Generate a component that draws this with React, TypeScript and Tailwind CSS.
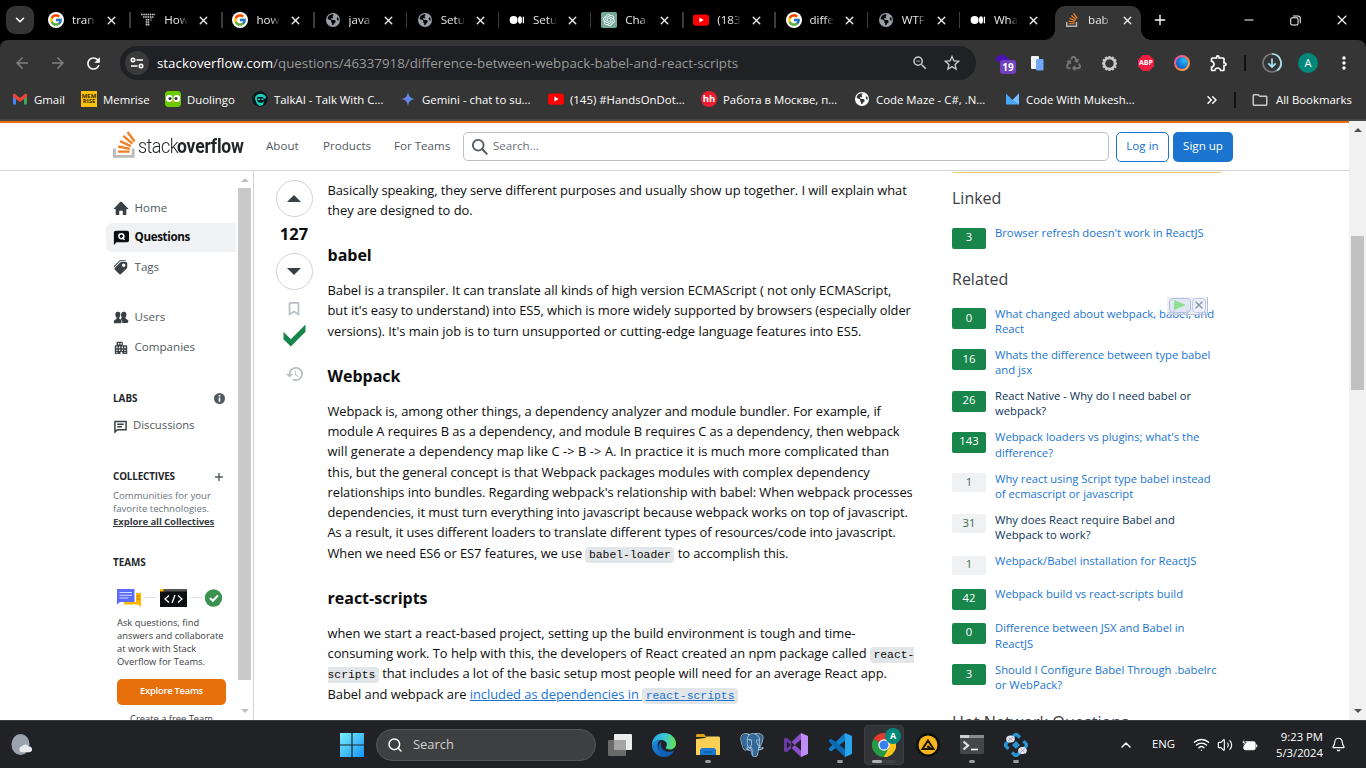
import React from "react";
import { FcGoogle } from "react-icons/fc";
import { FaEarthAmericas, FaRecycle } from "react-icons/fa6";
import { RiOpenaiFill } from "react-icons/ri";
import { SiPostgresql } from "react-icons/si";
import { BsGearWide } from "react-icons/bs";
import { MdOutlineExtension, MdOutlineFolder, MdStarBorder, MdOutlineZoomOut, MdRefresh, MdArrowBack, MdArrowForward, MdMoreVert } from "react-icons/md";
import { ChevronDown, ChevronUp, ChevronsRight, X, Plus, Wifi, Volume2, Bell, Search, Minus } from "lucide-react";

/* ---------- small logos ---------- */

const Google = () => (
  <span className="flex size-4 items-center justify-center rounded-full bg-white">
    <FcGoogle className="size-[14px]" />
  </span>
);
const Globe = ({ white = false }: { white?: boolean }) => (
  <FaEarthAmericas className={white ? "size-3.5 text-white" : "size-3.5 text-[#9aa0a6]"} />
);
const Medium = () => (
  <svg viewBox="0 0 16 16" className="size-4" fill="#fff">
    <circle cx="4.6" cy="8" r="4" />
    <ellipse cx="11" cy="8" rx="2" ry="3.8" />
    <rect x="13.8" y="4.7" width="1.2" height="6.6" />
  </svg>
);
const Youtube = () => (
  <svg viewBox="0 0 16 16" className="size-4">
    <rect x="0" y="2.4" width="16" height="11.4" rx="3" fill="#f00" />
    <path d="M6.4 5.6v5L10.6 8z" fill="#fff" />
  </svg>
);
const ChatGpt = () => (
  <span className="flex size-4 items-center justify-center rounded-xs bg-[#74aa9c]">
    <RiOpenaiFill className="size-3.5 text-white" />
  </span>
);
const DottedT = () => (
  <svg viewBox="0 0 16 16" className="size-4">
    <path d="M1 2.5h14M3 5h11M8.5 7v7M6.5 7v7" stroke="#ccc" strokeWidth="1.6" strokeDasharray="1.6 .6" />
    <path d="M11 5v4" stroke="#888" strokeWidth="1" />
  </svg>
);
const StackGlyph = ({ className, base = "#BCBBBB" }: { className: string; base?: string }) => (
  <svg viewBox="0 0 32 37" className={className}>
    <path d="M26 33v-9h4v13H0V24h4v9h22Z" fill={base} />
    <path
      d="m21.5 0-2.7 2 9.9 13.3 2.7-2L21.5 0ZM26 18.4 13.3 7.8l2.1-2.5 12.7 10.6-2.1 2.5ZM9.1 15.2l15 7 1.4-3-15-7-1.4 3Zm14 10.79.68-2.95-16.1-3.35L7 23l16.1 2.99ZM23 30H7v-3h16v3Z"
      fill="#F48024"
    />
  </svg>
);

/* ---------- browser chrome ---------- */

const tabs: { icon: React.ReactNode; label: string }[] = [
  { icon: <Google />, label: "tran" },
  { icon: <DottedT />, label: "How" },
  { icon: <Google />, label: "how" },
  { icon: <Globe />, label: "java" },
  { icon: <Globe />, label: "Setu" },
  { icon: <Medium />, label: "Setu" },
  { icon: <ChatGpt />, label: "Cha" },
  { icon: <Youtube />, label: "(183" },
  { icon: <Google />, label: "diffe" },
  { icon: <Globe />, label: "WTF" },
  { icon: <Medium />, label: "Wha" },
];

const TabInner = ({ icon, label }: { icon: React.ReactNode; label: string }) => (
  <>
    <span className="flex w-4 shrink-0 justify-center">{icon}</span>
    <span className="ml-2 w-6 shrink-0 whitespace-nowrap text-[11.6px] text-[#e8e8e8] [mask-image:linear-gradient(to_right,#000_60%,transparent)]">
      {label}
    </span>
    <X className="ml-[9px] size-[13px] shrink-0 text-[#eee]" strokeWidth={2.6} />
  </>
);

const TabStrip = () => (
  <div className="flex h-10 bg-black">
    <div className="w-10 pl-1.5 pt-1.5">
      <div className="flex size-7 items-center justify-center rounded-[9px] bg-[#353535]">
        <ChevronDown className="size-3.5 text-white" strokeWidth={2.6} />
      </div>
    </div>
    {tabs.map((t, i) => (
      <div key={i} className="flex w-[92.2px] shrink-0 items-center pl-2">
        <TabInner {...t} />
        {i < 10 && <span className="ml-[11px] h-4 w-[1.5px] shrink-0 bg-[#3c3c3c]" />}
      </div>
    ))}
    <div className="-ml-2 flex h-10 w-[106px] shrink-0 items-end">
      <span className="ml-[-1px] size-2.5 bg-[radial-gradient(circle_at_0_0,#000_9.5px,#353535_10px)]" />
      <div className="flex h-[34px] w-[86px] items-center rounded-t-[10px] bg-[#353535] pb-1.5 pl-[9px]">
        <TabInner icon={<StackGlyph className="h-[14px] w-3" base="#b5b5b5" />} label="bab" />
      </div>
      <span className="size-2.5 bg-[radial-gradient(circle_at_100%_0,#000_9.5px,#353535_10px)]" />
    </div>
    <div className="flex flex-1 items-center text-white">
      <Plus className="size-4" strokeWidth={2} />
      <Minus className="ml-[74px] size-[14px]" strokeWidth={1.8} />
      <svg viewBox="0 0 12 12" className="ml-[34px] size-[11px]" fill="none" stroke="#fff" strokeWidth="1.1">
        <rect x=".8" y="2.9" width="8" height="8" rx="1.6" />
        <path d="M3.2 1h5.6a2.4 2.4 0 0 1 2.4 2.4V9" />
      </svg>
      <X className="ml-[33px] size-[16px]" strokeWidth={1.6} />
    </div>
  </div>
);

const Toolbar = () => (
  <div className="flex h-[46px] items-center rounded-t-lg bg-[#353535]">
    <MdArrowBack className="ml-[13px] size-[18px] text-[#808080]" />
    <MdArrowForward className="ml-[18px] size-[18px] text-[#808080]" />
    <MdRefresh className="ml-[17px] size-[19px] text-white" />
    <div className="ml-[17px] flex h-[34px] w-[856px] items-center rounded-full bg-[#202124] pl-[5px]">
      <span className="flex size-6 items-center justify-center rounded-full bg-[#3a3a3a]">
        <svg viewBox="0 0 14 12" className="h-3 w-[14px]" fill="none" stroke="#fff" strokeWidth="1.6">
          <circle cx="3" cy="3" r="1.7" />
          <path d="M6.5 3H13M1 9h6.5" />
          <circle cx="11" cy="9" r="1.7" />
        </svg>
      </span>
      <span className="ml-2 w-[754px] whitespace-nowrap pt-px text-[13.35px] text-[#9a9a9a]">
        <span className="text-white">stackoverflow.com</span>/questions/46337918/difference-between-webpack-babel-and-react-scripts
      </span>
      <MdOutlineZoomOut className="size-[18px] shrink-0 text-[#c4c7c5]" />
      <MdStarBorder className="ml-[13px] size-[20px] shrink-0 text-[#c4c7c5]" />
    </div>
    <div className="relative ml-[17px] h-6 w-7 shrink-0">
      <svg viewBox="0 0 28 24" className="h-6 w-7">
        <path d="M1 8l8-5 8 5-4 2v6l-6-4z" fill="#4a12b0" />
      </svg>
      <span className="absolute left-[7px] top-[9px] flex h-[14px] w-4 items-center justify-center rounded-[3px] bg-[#7040c0] text-[10px] font-bold text-white">19</span>
    </div>
    <svg viewBox="0 0 16 16" className="ml-[9px] size-4 shrink-0">
      <rect x="1" y="1" width="8" height="13" rx="1" fill="#f1f5ff" />
      <rect x="6" y="4" width="7.500" height="11.500" rx="1" fill="#6ea8fa" />
    </svg>
    <FaRecycle className="ml-5 size-[15px] shrink-0 text-[#757575]" />
    <BsGearWide className="ml-[21px] size-[15px] shrink-0 text-[#d0d0d0]" strokeWidth={1} />
    <span className="ml-[21px] flex size-4 shrink-0 items-center justify-center bg-[#ed1c40] text-[7px] font-bold text-white [clip-path:polygon(30%_0,70%_0,100%_30%,100%_70%,70%_100%,30%_100%,0_70%,0_30%)]">ABP</span>
    <span className="ml-5 flex size-4 shrink-0 items-center justify-center rounded-full bg-linear-135 from-[#e040c0] via-[#ff7040] to-[#ffc060]">
      <span className="size-3 rounded-full bg-[radial-gradient(circle_at_70%_30%,#20c0ff,#1070d0_60%,#1050a0)]" />
    </span>
    <MdOutlineExtension className="ml-[19px] size-5 shrink-0 text-white" />
    <span className="ml-[15px] h-4 w-0.5 shrink-0 bg-[#111]" />
    <svg viewBox="0 0 20 20" className="ml-4 size-5 shrink-0" fill="none" stroke="#a8e4f4" strokeWidth="1.7">
      <circle cx="10" cy="10" r="9" stroke="#7c7c7c" />
      <path d="M10 1a9 9 0 0 1 5 16.500" />
      <path d="M10 5.500v8.500M6.300 10.400 10 14l3.700-3.600" />
    </svg>
    <span className="ml-4 flex size-5 shrink-0 items-center justify-center rounded-full bg-[#00897b] text-[11px] text-white">A</span>
    <MdMoreVert className="ml-4 size-5 shrink-0 text-white" />
  </div>
);

const Bookmark = ({ icon, label, w }: { icon: React.ReactNode; label: string; w: string }) => (
  <div className={"flex shrink-0 items-center " + w}>
    <span className="flex w-4 shrink-0 justify-center">{icon}</span>
    <span className="ml-1.5 whitespace-nowrap">{label}</span>
  </div>
);

const Bookmarks = () => (
  <div className="flex h-[35px] items-center border-b-2 border-[#46484a] bg-[#353535] pb-[6px] pl-3 text-[11.4px] text-white">
    <Bookmark
      w="w-[69px]"
      label="Gmail"
      icon={
        <svg viewBox="0 0 16 12" className="h-3 w-4">
          <path d="M1 1.500v10h3V5z" fill="#4285f4" />
          <path d="M15 1.500v10h-3V5z" fill="#34a853" />
          <path d="M1 1.500 2.500.5 8 5l5.500-4.500L15 1.500V4L8 9 1 4z" fill="#ea4335" />
        </svg>
      }
    />
    <Bookmark
      w="w-[84px]"
      label="Memrise"
      icon={<span className="flex size-4 flex-col items-center justify-center bg-[#fdc20c] text-[6px] font-bold leading-[5.500px] text-[#3a2c00]"><span>MEM</span><span>RISE</span></span>}
    />
    <Bookmark
      w="w-[87px]"
      label="Duolingo"
      icon={
        <svg viewBox="0 0 16 16" className="size-4">
          <rect width="16" height="16" rx="3.500" fill="#6ccb00" />
          <rect x="1" y="4" width="6.500" height="7" rx="3" fill="#fff" />
          <rect x="8.500" y="4" width="6.500" height="7" rx="3" fill="#fff" />
          <circle cx="5" cy="7.500" r="1.600" fill="#333" />
          <circle cx="11" cy="7.500" r="1.600" fill="#333" />
          <path d="M6.500 10h3L8 12z" fill="#ff9600" />
        </svg>
      }
    />
    <Bookmark
      w="w-[148px]"
      label="TalkAI - Talk With C..."
      icon={
        <svg viewBox="0 0 16 16" className="size-4">
          <circle cx="8" cy="8" r="7.800" fill="#06171c" />
          <path d="M3 8c0-3 2-5 5.500-5S14 5 14 7l-2 1-1-2H5.500l-.5 2 1 3 3 1 3-1.500-1 3.500-3 1-3-2z" fill="#19cdbb" />
          <path d="M6 7.500h2v1.500H6zM9.500 7.500h2v1.500h-2z" fill="#19cdbb" />
        </svg>
      }
    />
    <Bookmark
      w="w-[148px]"
      label="Gemini - chat to su..."
      icon={
        <svg viewBox="0 0 16 16" className="size-3.5">
          <defs><linearGradient id="gem"><stop stopColor="#8e70e8" /><stop offset="1" stopColor="#3a9ae8" /></linearGradient></defs>
          <path d="M8 0c.8 5 3 7.200 8 8-5 .8-7.200 3-8 8-.8-5-3-7.200-8-8 5-.8 7.200-3 8-8z" fill="url(#gem)" />
        </svg>
      }
    />
    <Bookmark w="w-[153px]" label="(145) #HandsOnDot..." icon={<Youtube />} />
    <Bookmark w="w-[153px]" label="Работа в Москве, п..." icon={<span className="flex size-4 items-center justify-center rounded-full bg-[#ee1c2e] pb-px text-[9.5px] font-bold">hh</span>} />
    <Bookmark w="w-[150px]" label="Code Maze - C#, .N..." icon={<Globe white />} />
    <Bookmark
      w="w-[200px]"
      label="Code With Mukesh..."
      icon={
        <svg viewBox="0 0 14 12" className="h-3 w-[13px]">
          <path d="M0 0l7 7 7-7v12H0z" fill="#4aa6f8" />
          <path d="M7 7l7-7v12z" fill="#74beff" />
        </svg>
      }
    />
    <ChevronsRight className="size-4 shrink-0" strokeWidth={2.2} />
    <span className="ml-[14px] h-4 w-0.5 shrink-0 bg-[#111]" />
    <MdOutlineFolder className="ml-[15px] size-[18px] shrink-0 text-[#c8c8c8]" />
    <span className="ml-[7px] whitespace-nowrap">All Bookmarks</span>
  </div>
);

/* ---------- site header ---------- */

const SearchGlyph = ({ className }: { className: string }) => (
  <svg viewBox="0 0 18 18" className={className} fill="#525960">
    <path d="m18 16.500-5.140-5.180h-.35a7 7 0 1 0-1.190 1.190v.35L16.500 18l1.500-1.500ZM12 7A5 5 0 1 1 2 7a5 5 0 0 1 10 0Z" />
  </svg>
);

const SiteHeader = () => (
  <header className="flex h-[50px] shrink-0 items-center border-b border-t-2 border-b-[#d0d3d7] border-t-[#e7700d] bg-white text-[11.6px] text-[#525960]">
    <div className="flex w-[153px] items-start pl-[113px]">
      <StackGlyph className="mb-1 h-[27px] w-[23px] shrink-0" />
      <span className="ml-[2px] mt-[2px] flex text-[20px] leading-[27px] text-[#222426] [font-family:Roboto,sans-serif]">
        <span className="w-[39px] origin-left scale-x-[.9] tracking-[-0.6px] font-light">stack</span>
        <span className="origin-left scale-x-[.875] tracking-[-0.2px] font-bold">overflow</span>
      </span>
    </div>
    <span className="mb-px ml-[113px] w-[57px]">About</span>
    <span className="mb-px w-[71px]">Products</span>
    <span className="mb-px w-[69px] whitespace-nowrap">For Teams</span>
    <div className="flex h-[29px] w-[646px] items-center rounded-[5px] border border-[#babfc4] pl-2">
      <SearchGlyph className="size-4" />
      <span className="mb-px ml-[5px] text-[#6a737c]">Search...</span>
    </div>
    <div className="ml-[7px] flex h-[30px] w-[53px] items-center justify-center rounded-[5px] border border-[#1b75d0] pb-0.5 text-[#1b75d0]">Log in</div>
    <div className="ml-1 flex h-[30px] w-[60px] items-center justify-center rounded-[5px] bg-[#1b75d0] pb-0.5 text-white">Sign up</div>
  </header>
);

/* ---------- left navigation ---------- */

const HomeIcon = () => (
  <svg viewBox="0 0 18 18" className="size-4" fill="#3b4045">
    <path d="M15 10v6a1 1 0 0 1-1 1h-3v-5H7v5H4a1 1 0 0 1-1-1v-6H.5L8 2.300c.6-.5 1.400-.5 2 0l7.500 7.700z" />
  </svg>
);
const QuestionIcon = () => (
  <svg viewBox="0 0 18 18" className="size-4">
    <path d="M4 2h12a2 2 0 0 1 2 2v9a2 2 0 0 1-2 2H4l-3 3V4c0-1.100.9-2 3-2Z" fill="#0c0d0e" />
    <circle cx="9.400" cy="8.200" r="2.800" fill="none" stroke="#fff" strokeWidth="1.700" />
    <path d="m10 9.500 3 2.600" stroke="#fff" strokeWidth="1.400" />
  </svg>
);
const TagsIcon = () => (
  <svg viewBox="0 0 18 18" className="size-4" fill="#3b4045">
    <path d="M9.240 1a3 3 0 0 0-2.120.88l-5.700 5.700a2 2 0 0 0-.38 2.310 3 3 0 0 1 .67-1.010l6-6A3 3 0 0 1 9.830 2H14a3 3 0 0 1 .79.100A2 2 0 0 0 13 1H9.240Z" />
    <path d="M9.830 3a2 2 0 0 0-1.420.59l-6 6a2 2 0 0 0 0 2.820L6.600 16.600a2 2 0 0 0 2.820 0l6-6A2 2 0 0 0 16 9.170V5a2 2 0 0 0-2-2H9.830ZM12 9a2 2 0 1 1 0-4 2 2 0 0 1 0 4Z" />
  </svg>
);
const UsersIcon = () => (
  <svg viewBox="0 0 18 18" className="size-4" fill="#3b4045">
    <path d="M17 14a2 2 0 0 1-1 1.700h-5.500V14.500c0-1.500-1-2.300-2.300-3 1.300-.4 1.600-1.100 1.500-1.900C9 8.300 8.700 5.800 9.600 4.300c1-1.700 4.300-1.700 5.200.1.700 1.600.3 3.900-.9 5.400.2 1.900 3.600 1.600 3.600 4.200z" />
    <path d="M9.300 16H1.200C.6 13.500 1 12.300 3.200 11.400c1-.4 1-.9.900-1.500C2.500 8.200 2.200 5.700 3.100 4.200 4 2.700 7 2.700 7.900 4.300c.8 1.500.4 4-.9 5.600-.1.700 0 1.100.9 1.500 1.600.6 2.200 1.800 1.400 4.600z" />
  </svg>
);
const CompaniesIcon = () => (
  <svg viewBox="0 0 18 18" className="size-4" fill="#3b4045">
    <path
      fillRule="evenodd"
      d="M5 3h5a1 1 0 0 1 1 1v3h4a1 1 0 0 1 1 1v9h-5.500v-2.500H8.500V17H2V8a1 1 0 0 1 1-1h1V4a1 1 0 0 1 1-1zM5.600 4.600v1.600h1.500V4.600zm2.800 0v1.600h1.500V4.600zM3.600 8.500v2h1.500v-2zm3 0v2h1.500v-2zm3.200 0v2h1.500v-2zm3 0v2h1.500v-2zM3.600 12v1.500h1.500V12zm3 0v1.500h1.500V12zm3.200 0v1.500h1.500V12zm3 0v1.500h1.500V12zM3.600 15v1h1.500v-1zm9.200 0v1h1.500v-1z"
    />
  </svg>
);
const DiscussIcon = () => (
  <svg viewBox="0 0 14 14" className="size-[13px]" fill="none" stroke="#3b4045" strokeWidth="1.600">
    <path d="M1 13V1.500h12v9H3.500L1 13zM3.500 4.500h7M3.500 7.300h5" />
  </svg>
);

const NavRow = ({ icon, label, active = false }: { icon: React.ReactNode; label: string; active?: boolean }) => (
  <div className={active ? "flex h-[29.500px] items-center rounded-l-md bg-[#f0f1f2] pl-[7px] font-bold text-[#0c0d0e]" : "flex h-[29.500px] items-center pl-[7px]"}>
    {icon}
    <span className={active ? "mb-px ml-[5.500px] tracking-[-0.35px]" : "mb-px ml-[5.500px]"}>{label}</span>
  </div>
);

const TeamsArt = () => (
  <svg viewBox="0 0 106 18" className="h-[18px] w-[106px]">
    <path d="M12 4h12v14l-3-2.500h-14V13H19V4z" fill="#ffb500" />
    <path d="M20 7h2.500M20 10h2.500" stroke="#a87000" />
    <path d="M0 0h17.500v13H3l-3 2.500z" fill="#5c6bff" />
    <path d="M2.500 3.500H15M2.500 6.300H15M2.500 9h9" stroke="#d5dbff" />
    <path d="M28 8.500h11M74 8.500h11" stroke="#ddd" />
    <rect x="43" width="27" height="18" fill="#0c0d0e" />
    <path d="M46 0h24v2.500H46z" fill="#555" />
    <path d="M43 0h3.500v2.500H43z" fill="#ffb500" />
    <path d="m52 6.500-4 3.500 4 3.500M61 6.500l4 3.500-4 3.500M58 6l-3 8" stroke="#fff" strokeWidth="1.300" fill="none" />
    <circle cx="96.500" cy="9" r="8.700" fill="#3a9250" />
    <path d="m93 9 2.800 2.800L101 6.500" stroke="#fff" strokeWidth="2" fill="none" />
  </svg>
);

const LeftNav = () => (
  <nav className="ml-[106px] flex w-[148px] shrink-0 border-r border-[#d0d3d7]">
    <div className="h-full w-[130px] shrink-0 overflow-hidden pt-[22px] text-[11.6px] text-[#525960]">
      <NavRow icon={<HomeIcon />} label="Home" />
      <NavRow icon={<QuestionIcon />} label="Questions" active />
      <NavRow icon={<TagsIcon />} label="Tags" />
      <div className="h-[21px]" />
      <NavRow icon={<UsersIcon />} label="Users" />
      <NavRow icon={<CompaniesIcon />} label="Companies" />
      <div className="mt-[27px] flex h-5 items-center justify-between pl-[7px] pr-[11px] text-[9.900px] font-bold text-[#232629]">
        LABS
        <svg viewBox="0 0 12 12" className="size-[11px]">
          <circle cx="6" cy="6" r="6" fill="#525960" />
          <path d="M6 2.300v1.600M6 5v4.500" stroke="#fff" strokeWidth="1.800" />
        </svg>
      </div>
      <div className="mt-[3px] flex h-[29px] items-center pl-[8px] text-[11.300px]"><DiscussIcon /><span className="mb-px ml-[6px]">Discussions</span></div>
      <div className="mt-[26px] flex h-5 items-center justify-between pl-[7px] pr-[11px] text-[9.900px] font-bold tracking-[-0.15px] text-[#232629]">
        <span className="mb-px">COLLECTIVES</span>
        <Plus className="size-3 text-[#525960]" strokeWidth={2.800} />
      </div>
      <div className="mt-0.5 whitespace-nowrap pl-[7px] text-[9.600px] leading-[13px] text-[#6a737c]">
        <div>Communities for your</div>
        <div>favorite technologies.</div>
        <div className="font-bold tracking-[-0.12px] text-[#3b4045] underline">Explore all Collectives</div>
      </div>
      <div className="mt-[25px] h-5 pl-[7px] pt-[2px] text-[9.900px] font-bold text-[#232629]">TEAMS</div>
      <div className="mt-[16px] pl-[11px]"><TeamsArt /></div>
      <div className="mt-[9px] whitespace-nowrap pl-[11px] text-[9.350px] leading-[13px] text-[#3b4045]">
        <div>Ask questions, find</div>
        <div>answers and collaborate</div>
        <div>at work with Stack</div>
        <div>Overflow for Teams.</div>
      </div>
      <div className="ml-[11px] mt-[11px] flex h-[26px] w-[109px] items-center justify-center rounded-[5px] bg-[#e7700d] text-[9.400px] font-semibold tracking-[-0.25px] text-white">Explore Teams</div>
      <div className="ml-[11px] mt-[7px] w-[109px] whitespace-nowrap text-center text-[9.350px] leading-[13px] text-[#3b4045]">Create a free Team</div>
    </div>
    <div className="ml-[2px] flex w-[13px] flex-col items-center">
      <svg viewBox="0 0 8 4" className="mt-[7px] h-1 w-2 shrink-0" fill="#c0c0c0"><path d="M0 4 4 0l4 4z" /></svg>
      <div className="mt-[6px] h-[492px] w-[13px] shrink-0 bg-[#c9c9c9]" />
      <svg viewBox="0 0 8 4" className="mt-[29px] h-1 w-2 shrink-0" fill="#c0c0c0"><path d="M0 0h8L4 4z" /></svg>
    </div>
  </nav>
);

/* ---------- answer ---------- */

const VoteColumn = () => (
  <div className="ml-[22px] flex w-9 shrink-0 flex-col items-center pt-[9px]">
    <div className="flex size-[37px] items-center justify-center rounded-full border border-[#d0d3d7]">
      <svg viewBox="0 0 14 7" className="h-[7px] w-[14px]" fill="#3b4045"><path d="M0 7l7-7 7 7z" /></svg>
    </div>
    <div className="flex h-9 items-center pb-0.5 text-[16.500px] font-bold text-[#0c0d0e]">127</div>
    <div className="flex size-[37px] items-center justify-center rounded-full border border-[#d0d3d7]">
      <svg viewBox="0 0 14 7" className="h-[7px] w-[14px]" fill="#3b4045"><path d="M0 0h14L7 7z" /></svg>
    </div>
    <svg viewBox="0 0 18 18" className="mt-[11px] size-4" fill="#babfc4">
      <path d="m9 10.600 4 2.660V3H5v10.260l4-2.660ZM3 17V3c0-1.100.9-2 2-2h8a2 2 0 0 1 2 2v14l-6-4-6 4Z" />
    </svg>
    <svg viewBox="0 0 36 36" className="mt-[2px] size-[33px]" fill="#18864b"><path d="m6 14 8 8L30 6v8L14 30l-8-8v-8Z" /></svg>
    <svg viewBox="0 0 19 18" className="mt-[14px] h-4 w-[17px]" fill="#babfc4">
      <path d="M3 9a8 8 0 1 1 3.730 6.770L8.200 14.300A6 6 0 1 0 5 9l3.010-.01-4 4-4-4h3L3 9Zm7-4h1.010L11 9.360l3.220 2.100-.6.93L10 10V5Z" />
    </svg>
  </div>
);

const Code = ({ children, className = "rounded-[4px] px-[3.500px]" }: { children: React.ReactNode; className?: string }) => (
  <code className={"bg-[#e3e6e8] py-[2px] text-[11.400px] tracking-normal [font-family:'Liberation_Mono',monospace] " + className}>{children}</code>
);
const H = ({ children }: { children: React.ReactNode }) => (
  <h2 className="flex h-[60px] items-center pt-[10px] text-[16px] font-bold">{children}</h2>
);
const Paragraph = ({ children }: { children: React.ReactNode }) => <div className="whitespace-nowrap">{children}</div>;
const L = ({ children, t = "" }: { children: React.ReactNode; t?: string }) => <div className={"h-[20.250px] " + t}>{children}</div>;

const snug = "tracking-[-0.065px]";
const slim = "tracking-[-0.035px]";

const Answer = () => (
  <article className="ml-[15.500px] w-[624.500px] shrink-0 pt-[8.500px] text-[12.900px] leading-[20.250px] text-[#0c0d0e]">
    <Paragraph>
      <L t={snug}>Basically speaking, they serve different purposes and usually show up together. I will explain what</L>
      <L>they are designed to do.</L>
    </Paragraph>
    <H>babel</H>
    <Paragraph>
      <L t={slim}>Babel is a transpiler. It can translate all kinds of high version ECMAScript ( not only ECMAScript,</L>
      <L t={snug}>but it's easy to understand) into ES5, which is more widely supported by browsers (especially older</L>
      <L>versions). It's main job is to turn unsupported or cutting-edge language features into ES5.</L>
    </Paragraph>
    <H>Webpack</H>
    <Paragraph>
      <L t={snug}>Webpack is, among other things, a dependency analyzer and module bundler. For example, if</L>
      <L t={snug}>module A requires B as a dependency, and module B requires C as a dependency, then webpack</L>
      <L t="tracking-[0.055px]">{"will generate a dependency map like C -> B -> A. In practice it is much more complicated than"}</L>
      <L t={slim}>this, but the general concept is that Webpack packages modules with complex dependency</L>
      <L t={snug}>relationships into bundles. Regarding webpack's relationship with babel: When webpack processes</L>
      <L t={snug}>dependencies, it must turn everything into javascript because webpack works on top of javascript.</L>
      <L t="tracking-[-0.09px]">As a result, it uses different loaders to translate different types of resources/code into javascript.</L>
      <L t={snug}>When we need ES6 or ES7 features, we use <Code>babel-loader</Code> to accomplish this.</L>
    </Paragraph>
    <H>react-scripts</H>
    <Paragraph>
      <L t={slim}>when we start a react-based project, setting up the build environment is tough and time-</L>
      <L t={slim}>consuming work. To help with this, the developers of React created an npm package called <Code className="rounded-l-[4px] pl-[3.500px]">react-</Code></L>
      <L t={slim}><Code className="rounded-r-[4px] pr-[3.500px]">scripts</Code> that includes a lot of the basic setup most people will need for an average React app.</L>
      <L t={slim}>Babel and webpack are <a className="text-[#1b75d0] underline">included as dependencies in <Code>react-scripts</Code></a></L>
    </Paragraph>
  </article>
);

/* ---------- right column ---------- */

type Related = { n: number; lines: string[]; kind?: "visited"; muted?: boolean; h: string };
const related: Related[] = [
  { n: 0, lines: ["What changed about webpack, babel, and", "React"], h: "h-[41.300px]" },
  { n: 16, lines: ["Whats the difference between type babel", "and jsx"], h: "h-[41.300px]" },
  { n: 26, lines: ["React Native - Why do I need babel or", "webpack?"], kind: "visited", h: "h-[41.300px]" },
  { n: 143, lines: ["Webpack loaders vs plugins; what's the", "difference?"], h: "h-[41.300px]" },
  { n: 1, lines: ["Why react using Script type babel instead", "of ecmascript or javascript"], muted: true, h: "h-[41.300px]" },
  { n: 31, lines: ["Why does React require Babel and", "Webpack to work?"], kind: "visited", muted: true, h: "h-[41.300px]" },
  { n: 1, lines: ["Webpack/Babel installation for ReactJS"], muted: true, h: "h-[33px]" },
  { n: 42, lines: ["Webpack build vs react-scripts build"], h: "h-[34px]" },
  { n: 0, lines: ["Difference between JSX and Babel in", "ReactJS"], h: "h-[41.300px]" },
  { n: 3, lines: ["Should I Configure Babel Through .babelrc", "or WebPack?"], h: "h-[41.300px]" },
];

const RelatedRow = ({ n, lines, kind, muted, h }: Related) => (
  <div className={"flex items-start " + h}>
    <span
      className={
        muted
          ? "mt-[2.500px] flex h-[19px] w-[34px] shrink-0 items-center justify-center rounded-xs bg-[#f0f1f2] pb-px text-[#3b6a4f]"
          : "mt-[2.500px] flex h-[21px] w-[34px] shrink-0 items-center justify-center rounded-xs bg-[#18864b] pb-px text-white"
      }
    >
      {n}
    </span>
    <span className={kind ? "ml-[9px] whitespace-nowrap leading-[15.300px] text-[#0c3358]" : "ml-[9px] whitespace-nowrap leading-[15.300px] text-[#1b75d0]"}>
      {lines.map((l) => <span key={l} className="block">{l}</span>)}
    </span>
  </div>
);

const RightColumn = () => (
  <aside className="w-[270px] shrink-0 text-[11.250px]">
    <div className="h-[2px] rounded-b-sm border-b border-[#f1c96b]" />
    <h3 className="mt-[13px] h-6 text-[16px] leading-6 text-[#3b4045]">Linked</h3>
    <div className="mt-[15px]"><RelatedRow n={3} lines={["Browser refresh doesn't work in ReactJS"]} h="h-[41.500px]" /></div>
    <h3 className="h-6 text-[16px] leading-6 text-[#3b4045]">Related</h3>
    <div className="relative mt-[15px]">
      {related.map((r, i) => <RelatedRow key={i} {...r} />)}
      <div className="absolute left-[215px] top-[-9px] flex h-[18px] w-[41px] items-center gap-px border-r border-b border-[#b4c0d4] bg-[#dfe6f4]/60 pl-0.5">
        <span className="flex h-[15px] w-[22px] items-center justify-center rounded-sm border border-[#b4bfdc] bg-[#d5dcef]/50">
          <svg viewBox="0 0 12 10" className="h-2.5 w-3" fill="#8fe08f"><path d="M0 0l12 5-12 5z" /></svg>
        </span>
        <span className="flex h-[15px] w-[14px] items-center justify-center rounded-sm border border-[#c2cbe0] bg-[#eef1f9]/50">
          <X className="size-3 text-[#8e98ac]" strokeWidth={3} />
        </span>
      </div>
    </div>
    <h3 className="mt-[7px] h-6 whitespace-nowrap text-[16.200px] leading-6 text-[#3b4045]">Hot Network Questions</h3>
  </aside>
);

/* ---------- taskbar ---------- */

const AppSlot = ({ children, mark = "none" }: { children: React.ReactNode; mark?: "none" | "dot" | "active" }) => (
  <div className={mark === "active" ? "flex h-10 w-10 shrink-0 flex-col items-center rounded-[4px] border border-[#3c3e41] bg-[#323437] pt-[7px]" : "flex h-10 w-10 shrink-0 flex-col items-center pt-2"}>
    <div className="flex size-6 items-center justify-center">{children}</div>
    {mark === "dot" && <span className="mt-[3px] h-[3px] w-1.5 rounded-full bg-[#9c9c9c]" />}
    {mark === "active" && (
      <span className="mt-[3px] h-[3px] w-6 rounded-full bg-[#3f4144]"><span className="block h-[3px] w-2.5 rounded-full bg-[#b0b0b0]" /></span>
    )}
  </div>
);

const Edge = () => (
  <svg viewBox="0 0 24 24" className="size-6">
    <defs>
      <linearGradient id="edgeTop" x1="0" y1=".4" x2="1" y2=".5"><stop stopColor="#2aa8e8" /><stop offset=".5" stopColor="#38c8d8" /><stop offset="1" stopColor="#66e050" /></linearGradient>
      <linearGradient id="edgeLow" x1="0" y1="0" x2="1" y2="1"><stop stopColor="#1b8fe0" /><stop offset="1" stopColor="#0c4fa0" /></linearGradient>
    </defs>
    <path d="M0 12C0 4.500 5.500 0 12 0c7 0 12 5 12 10.500 0 3.500-2.500 6-6 6-2.500 0-4.300-1-4.300-2 0-.7 1.200-1.200 1.200-3 0-2.500-2.700-4.500-6-4.500C4.500 7 1.500 9 0 12z" fill="url(#edgeTop)" />
    <path d="M0 12c1-3.500 4.500-5 8-4.600C5.500 9 5 12 6 15c1.500 4.500 6 6.500 10.500 5.500 2-.4 3.800-1.200 5.500-2.500-2 4-5.500 6-10 6C5.500 24 0 18.800 0 12z" fill="url(#edgeLow)" />
    <path d="M10 8.800c-3 3 .2 10 6.500 10 2 0 4-.5 5.800-1.500-3 4-7.500 5.200-11.300 3.700C5.500 18.500 4.500 11 10 8.800z" fill="#125fb8" />
  </svg>
);
const Folder = () => (
  <svg viewBox="0 0 24 24" className="size-6">
    <path d="M0 2.500C0 1.600.6 1 1.500 1H8l2.500 3H0z" fill="#e0a010" />
    <path d="M0 6 9 5l2-1.500h11.500c.9 0 1.500.6 1.500 1.500v17H0z" fill="#fcd054" />
    <path d="M4 22v-4.500c0-1.400 1-2.500 2.500-2.500h11c1.500 0 2.500 1.100 2.500 2.500V22z" fill="#1878cc" />
    <path d="M8 19h8" stroke="#0c5fa8" strokeWidth="1.500" />
  </svg>
);
const VisualStudio = () => (
  <svg viewBox="0 0 24 24" className="size-6">
    <path d="M0 6l2.500-1.200L17 17.500V24L0 8zM0 18l2.500 1.200L17 6.500V0L0 16z" fill="#8a50c8" />
    <path d="M17 0l7 3v18l-7 3z" fill="#c08cf8" />
    <path d="M0 6l2.500-1.200 5 6.200v2l-5 6.200L0 18z" fill="#6a3aa8" />
    <path d="M3 8.500 6.500 12 3 15.500z" fill="#202225" />
    <path d="M11.500 12 17 7.500v9z" fill="#202225" />
  </svg>
);
const VsCode = () => (
  <svg viewBox="0 0 24 24" className="size-6">
    <path d="M17 0 1 15.200c-.5.500-.5 1 0 1.500L2.500 18c.4.300.8.300 1.200 0L18 7z" fill="#0f7fcc" />
    <path d="M17 24 1 8.800c-.5-.5-.5-1 0-1.500L2.500 6c.4-.3.8-.3 1.200 0L18 17z" fill="#0a6bb4" />
    <path d="M17 0l6 2.600c.6.300 1 .8 1 1.400v16c0 .6-.4 1.100-1 1.400L17 24z" fill="#2ba4ee" />
  </svg>
);
const Chrome = () => (
  <span className="relative flex size-6">
    <svg viewBox="0 0 24 24" className="size-6">
      <path d="M12 12 1.600 6A12 12 0 0 1 22.400 6z" fill="#e33b2e" />
      <path d="M12 12h0L22.400 6A12 12 0 0 1 12 24z" fill="#fcc41a" />
      <path d="M12 12v0L1.600 6A12 12 0 0 0 12 24l5.200-9z" fill="#279a45" />
      <path d="M12 6.500h10.700A12 12 0 0 1 12 24l5-9z" fill="#fcc41a" />
      <circle cx="12" cy="12" r="5.700" fill="#fff" />
      <circle cx="12" cy="12" r="4.500" fill="#3a7ff0" />
    </svg>
    <span className="absolute left-[13px] top-[-5px] flex size-4 items-center justify-center rounded-full bg-[#00897b] text-[9px] font-bold text-white">A</span>
  </span>
);

const Taskbar = () => (
  <footer className="flex h-12 shrink-0 items-center border-t border-[#3a3c3e] bg-[#202225] text-white">
    <svg viewBox="0 0 22 24" className="ml-[11px] mt-px h-[23px] w-[21px]">
      <ellipse cx="10" cy="11" rx="9.500" ry="11" fill="#9aa3ae" />
      <path d="M12 19a3 3 0 0 1-.5-6 4 4 0 0 1 7 0 3 3 0 0 1 1 6z" fill="#e8eaee" />
    </svg>
    <svg viewBox="0 0 24 24" className="ml-[308px] size-6">
      <defs><linearGradient id="win" x1="0" y1="0" x2="1" y2="1"><stop stopColor="#7beeff" /><stop offset="1" stopColor="#1496f4" /></linearGradient></defs>
      <path d="M0 0h11.400v11.400H0zM12.600 0H24v11.400H12.600zM0 12.600h11.400V24H0zM12.600 12.600H24V24H12.600z" fill="url(#win)" />
    </svg>
    <div className="ml-3 flex h-8 w-[220px] items-center rounded-full border border-[#55575a] bg-[#3d3f41] pl-[10px]">
      <Search className="size-4 text-white" strokeWidth={2.200} />
      <span className="ml-[10px] text-[12.900px] text-[#d2d2d2]">Search</span>
    </div>
    <div className="ml-[4px] flex gap-1">
      <AppSlot>
        <svg viewBox="0 0 24 24" className="size-6">
          <rect x="6" y="1" width="18" height="16" rx="1" fill="#ececec" />
          <rect x="0" y="7" width="18" height="16" rx="1" fill="#6a6a6a" />
          <rect x="6" y="7" width="12" height="10" fill="#a4a4a4" />
        </svg>
      </AppSlot>
      <AppSlot><Edge /></AppSlot>
      <AppSlot mark="dot"><Folder /></AppSlot>
      <AppSlot>
        <span className="relative flex size-6">
          <svg viewBox="0 0 24 24" className="absolute inset-0 size-6">
            <path d="M2 3c3-3 7-2.500 9-1.500C14 .5 20-.5 22.500 3.500c1 3-1 8-3 11.500l3 1.500-5 2c-.5 3-1.500 5-4.500 4.500-2 0-2.500-3-3-7l-4 1C3 14 0 7 2 3z" fill="#35699a" />
          </svg>
          <SiPostgresql className="relative size-6 text-[#b4cfe2]" />
        </span>
      </AppSlot>
      <AppSlot><VisualStudio /></AppSlot>
      <AppSlot mark="dot"><VsCode /></AppSlot>
      <AppSlot mark="active"><Chrome /></AppSlot>
      <AppSlot>
        <svg viewBox="0 0 24 24" className="size-6">
          <circle cx="12" cy="12" r="11.800" fill="#0d0d0d" />
          <circle cx="12" cy="12" r="9.500" fill="#f9b51c" />
          <path d="M12 7.500 6.500 16h7l-2-3 3.500 3h2.500z" fill="none" stroke="#1a1405" strokeWidth="2" />
        </svg>
      </AppSlot>
      <AppSlot mark="dot">
        <svg viewBox="0 0 24 20" className="h-5 w-6">
          <rect width="24" height="19" rx="1.500" fill="#444648" />
          <path d="M0 0h24v3H0z" fill="#8c8c8c" />
          <path d="M0 0h9v3H0z" fill="#d0d0d0" />
          <path d="m3.500 6.500 4.500 4-4.500 4" stroke="#ddd" strokeWidth="2.300" fill="none" />
          <path d="M11 14.500h7" stroke="#fff" strokeWidth="1.600" />
        </svg>
      </AppSlot>
      <AppSlot mark="dot">
        <svg viewBox="0 0 24 24" className="size-6">
          <path d="m8 4.500 4-3.500 4 3.500M19.500 8l3.500 4-3.500 4M16 19.500 12 23l-4-3.500M4.500 16 1 12l3.500-4" stroke="#2a94d0" strokeWidth="3.400" fill="none" />
          <path d="m12 8 4 4-4 4-4-4z" fill="#2a94d0" />
          <ellipse cx="6.500" cy="6" rx="4.300" ry="3.600" fill="#e8e8f4" />
          <ellipse cx="18.500" cy="17.500" rx="4.300" ry="3.600" fill="#e8e8f4" />
          <path d="m4 8 5-4M4.500 4.500l4 3M16 19.500l5-4M16.500 16l4 3" stroke="#8890a8" strokeWidth=".8" />
        </svg>
      </AppSlot>
    </div>
    <ChevronUp className="ml-[82px] size-4 shrink-0" strokeWidth={2.200} />
    <span className="ml-[18px] w-[24px] text-[11.300px]">ENG</span>
    <Wifi className="ml-[17px] size-[17px] shrink-0" strokeWidth={2} />
    <Volume2 className="ml-[7px] size-4 shrink-0" strokeWidth={1.700} />
    <svg viewBox="0 0 18 14" className="ml-[8px] h-[14px] w-[17px] shrink-0">
      <rect x="3" y="3.600" width="12" height="8.400" rx="1.500" fill="#fff" stroke="#fff" />
      <path d="M16 6.500h1.200v3H16z" fill="#fff" />
      <path d="M3.800 0 .8 5h2l-.8 3.500L5.500 4H3.600z" fill="#fff" stroke="#202225" strokeWidth=".8" />
    </svg>
    <div className="ml-[11px] w-[54px] whitespace-nowrap text-right text-[11.300px] leading-4">
      <div>9:23 PM</div>
      <div>5/3/2024</div>
    </div>
    <Bell className="ml-[8px] size-[15px] shrink-0" strokeWidth={1.900} />
  </footer>
);

const PageScrollbar = () => (
  <div className="flex w-[17px] shrink-0 flex-col items-center bg-[#f1f1f1]">
    <svg viewBox="0 0 8 4" className="mt-[7px] h-1 w-2 shrink-0" fill="#505050"><path d="M0 4 4 0l4 4z" /></svg>
    <div className="mt-[104px] h-[154px] w-[13px] shrink-0 bg-[#c1c1c1]" />
    <svg viewBox="0 0 8 4" className="mb-[7px] mt-auto h-1 w-2 shrink-0" fill="#505050"><path d="M0 0h8L4 4z" /></svg>
  </div>
);

export default function App() {
  return (
    <div className="flex h-[768px] w-[1366px] flex-col overflow-hidden bg-black [font-family:'Open_Sans','Noto_Sans',sans-serif]">
      <TabStrip />
      <Toolbar />
      <Bookmarks />
      <div className="flex min-h-0 flex-1 bg-white">
        <div className="flex w-[1349px] flex-col">
          <SiteHeader />
          <main className="flex min-h-0 flex-1 overflow-hidden">
            <LeftNav />
            <VoteColumn />
            <Answer />
            <RightColumn />
          </main>
        </div>
        <PageScrollbar />
      </div>
      <Taskbar />
    </div>
  );
}
